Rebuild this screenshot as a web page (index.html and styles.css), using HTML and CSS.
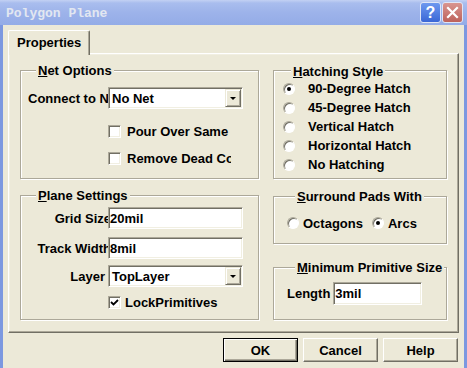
FILE: index.html
```html
<!DOCTYPE html>
<html lang="en">

<head>
    <meta charset="UTF-8">
    <title>Polygon Plane</title>
    <link rel="stylesheet" href="styles.css">
</head>

<body>
    <div class="window">
        <!-- Title bar -->
        <div class="titlebar">
            <span class="title">Polygon Plane</span>
            <div class="title-buttons">
                <span class="tbtn tbtn-help">?</span>
                <span class="tbtn tbtn-close">
                    <svg width="13" height="13" viewBox="0 0 13 13">
                        <path d="M2 2 L11 11 M11 2 L2 11" stroke="#fff" stroke-width="2.2" stroke-linecap="square" />
                    </svg>
                </span>
            </div>
        </div>

        <div class="client">
            <div class="tabs">
                <div class="tab">Properties</div>
            </div>

            <div class="panel">
                <!-- Left column -->
                <div class="col">
                    <div class="group group-net">
                        <div class="legend"><u>N</u>et Options</div>
                        <div class="row row-combo">
                            <label class="label clip">Connect to Net</label>
                            <div class="combo">
                                <span class="combo-text">No Net</span>
                                <span class="combo-btn"><i class="arrow"></i></span>
                            </div>
                        </div>
                        <div class="row row-check">
                            <span class="check"></span>
                            <span class="check-label">Pour Over Same Net Polygons Only</span>
                        </div>
                        <div class="row row-check">
                            <span class="check"></span>
                            <span class="check-label">Remove Dead Copper</span>
                        </div>
                    </div>

                    <div class="group group-plane">
                        <div class="legend"><u>P</u>lane Settings</div>
                        <div class="row row-grid">
                            <label class="label right">Grid Size</label>
                            <input class="field" type="text" value="20mil" readonly>
                        </div>
                        <div class="row row-track">
                            <label class="label right">Track Width</label>
                            <input class="field" type="text" value="8mil" readonly>
                        </div>
                        <div class="row row-layer">
                            <label class="label right layer">Layer</label>
                            <div class="combo">
                                <span class="combo-text">TopLayer</span>
                                <span class="combo-btn"><i class="arrow"></i></span>
                            </div>
                        </div>
                        <div class="row row-lock">
                            <span class="check checked">
                                <svg width="11" height="11" viewBox="0 0 11 11">
                                    <path d="M2 5 L4.5 7.5 L9 3" fill="none" stroke="#000" stroke-width="1.8" />
                                </svg>
                            </span>
                            <span class="check-label">LockPrimitives</span>
                        </div>
                    </div>
                </div>

                <!-- Right column -->
                <div class="col">
                    <div class="group group-hatch">
                        <div class="legend"><u>H</u>atching Style</div>
                        <div class="radio-row"><span class="radio on"></span>90-Degree Hatch</div>
                        <div class="radio-row"><span class="radio"></span>45-Degree Hatch</div>
                        <div class="radio-row"><span class="radio"></span>Vertical Hatch</div>
                        <div class="radio-row"><span class="radio"></span>Horizontal Hatch</div>
                        <div class="radio-row"><span class="radio"></span>No Hatching</div>
                    </div>

                    <div class="group group-pads">
                        <div class="legend"><u>S</u>urround Pads With</div>
                        <div class="row row-pads">
                            <span class="radio"></span>
                            <span class="pad-label">Octagons</span>
                            <span class="radio on"></span>
                            <span class="pad-label">Arcs</span>
                        </div>
                    </div>

                    <div class="group group-min">
                        <div class="legend"><u>M</u>inimum Primitive Size</div>
                        <div class="row row-length">
                            <label class="label-length">Length</label>
                            <input class="field field-short" type="text" value="3mil" readonly>
                        </div>
                    </div>
                </div>
            </div>

            <!-- Dialog buttons -->
            <div class="buttons">
                <button class="btn btn-default">OK</button>
                <button class="btn">Cancel</button>
                <button class="btn">Help</button>
            </div>
        </div>
    </div>
</body>

</html>
```

FILE: styles.css
```css
* {
    box-sizing: border-box;
}

body {
    margin: 0;
    font: bold 13px "Liberation Sans", Arial, sans-serif;
    color: #000;
}

.window {
    width: 467px;
    height: 368px;
    background: #7c98e0;
    display: flex;
    flex-direction: column;
    overflow: hidden;
}

/* Title bar */
.titlebar {
    height: 25px;
    flex: none;
    display: flex;
    align-items: center;
    justify-content: space-between;
    padding: 0 4px 0 6px;
    background: linear-gradient(#c3d1f3 0, #a9bdee 3px, #9db3ea 50%, #94ace7 100%);
}

.title {
    font: bold 13px "Liberation Mono", monospace;
    color: #e2e7f1;
    padding-top: 1px;
}

.title-buttons {
    display: flex;
    gap: 1px;
}

.tbtn {
    width: 21px;
    height: 21px;
    border-radius: 3px;
    border: 1px solid #dfe6f6;
    display: flex;
    align-items: center;
    justify-content: center;
    color: #fff;
}

.tbtn-help {
    background: linear-gradient(#6d98ef, #3a67d6);
    font: bold 16px "Liberation Sans", Arial, sans-serif;
}

.tbtn-close {
    background: linear-gradient(#d99590, #bd625b);
}

/* Client area */
.client {
    flex: 1;
    margin: 0 3px;
    background: #ece9d8;
    padding: 5px 5px 0 5px;
}

.tabs {
    display: flex;
}

.tab {
    position: relative;
    z-index: 1;
    width: 82px;
    height: 25px;
    margin-bottom: -2px;
    padding: 0 0 2px 8px;
    display: flex;
    align-items: center;
    background: #ece9d8;
    border: 1px solid;
    border-color: #fff #716f64 transparent #fff;
    border-bottom: none;
    border-radius: 2px 2px 0 0;
    box-shadow: inset -1px 0 #aca899;
}

.panel {
    height: 280px;
    display: grid;
    grid-template-columns: 239px 174px;
    column-gap: 14px;
    padding: 16px 11px 11px 11px;
    border: 1px solid;
    border-color: #fff #716f64 #716f64 #fff;
    box-shadow: inset -1px -1px #aca899, inset 1px 1px #f1efe2;
}

.col {
    display: flex;
    flex-direction: column;
}

/* Group boxes */
.group {
    border: 1px solid #aca899;
    box-shadow: inset 1px 1px #fff, 1px 1px #fff;
}

.legend {
    display: table;
    margin: -8px 0 0 8px;
    padding: 0 2px;
    line-height: 15px;
    background: #ece9d8;
}

.group-net {
    height: 109px;
    padding-left: 7px;
}

.group-plane {
    height: 125px;
    margin-top: 16px;
    padding-left: 7px;
}

.group-hatch {
    height: 109px;
    padding: 1px 0 0 9px;
}

.group-pads {
    height: 48px;
    margin-top: 17px;
    padding-left: 13px;
}

.group-min {
    height: 53px;
    margin-top: 23px;
    padding-left: 13px;
}

.row {
    display: flex;
    align-items: center;
}

.row-combo {
    margin-top: 9px;
}

.row-check {
    height: 27px;
    padding-left: 80px;
}

.row-combo + .row-check {
    margin-top: 9px;
}

.label {
    white-space: nowrap;
}

.clip {
    width: 80px;
    overflow: hidden;
}

.right {
    width: 83px;
    text-align: right;
}

.right.layer {
    padding-right: 6px;
}

.row-grid {
    margin-top: 4px;
}

.row-track {
    margin-top: 8px;
}

.row-layer {
    margin-top: 6px;
}

.row-lock {
    height: 20px;
    margin-top: 5px;
    padding-left: 80px;
}

.row-grid .field,
.row-track .field,
.row-layer .combo {
    margin-left: -3px;
}

/* Inputs */
.field {
    width: 135px;
    height: 22px;
    padding: 0 0 0 1px;
    font: inherit;
    color: #000;
    background: #fff;
    border: 1px solid;
    border-color: #aca899 #fff #fff #aca899;
    box-shadow: inset 1px 1px #716f64, inset -1px -1px #f1efe2;
    outline: none;
}

.field-short {
    width: 89px;
    height: 23px;
}

.combo {
    width: 135px;
    height: 22px;
    display: flex;
    align-items: stretch;
    background: #fff;
    border: 1px solid;
    border-color: #aca899 #fff #fff #aca899;
    box-shadow: inset 1px 1px #716f64, inset -1px -1px #f1efe2;
}

.combo-text {
    flex: 1;
    padding-left: 3px;
    display: flex;
    align-items: center;
}

.combo-btn {
    width: 16px;
    margin: 1px 1px 1px 0;
    display: flex;
    align-items: center;
    justify-content: center;
    background: #ece9d8;
    border: 1px solid;
    border-color: #ece9d8 #716f64 #716f64 #ece9d8;
    box-shadow: inset 1px 1px #fff, inset -1px -1px #aca899;
}

.arrow {
    width: 0;
    height: 0;
    border-left: 3px solid transparent;
    border-right: 3px solid transparent;
    border-top: 3px solid #000;
}

/* Checkboxes */
.check {
    width: 13px;
    height: 13px;
    flex: none;
    display: flex;
    align-items: center;
    justify-content: center;
    background: #fff;
    border: 1px solid;
    border-color: #aca899 #fff #fff #aca899;
    box-shadow: inset 1px 1px #716f64, inset -1px -1px #f1efe2;
}

.check-label {
    margin-left: 6px;
    width: 104px;
    overflow: hidden;
    white-space: nowrap;
}

.row-lock .check-label {
    margin-left: 4px;
    width: auto;
}

/* Radio buttons */
.radio-row {
    height: 19px;
    display: flex;
    align-items: center;
}

.radio {
    width: 12px;
    height: 12px;
    flex: none;
    border-radius: 50%;
    display: flex;
    align-items: center;
    justify-content: center;
    background: #fff;
    border: 1px solid;
    border-color: #aca899 #fff #fff #aca899;
    box-shadow: inset 1px 1px #716f64;
}

.radio-row .radio {
    margin-right: 13px;
}

.radio.on::after {
    content: "";
    width: 4px;
    height: 4px;
    border-radius: 50%;
    background: #000;
}

.row-pads {
    height: 20px;
    margin-top: 9px;
}

.pad-label {
    margin: 0 9px 0 4px;
}

.row-length {
    margin-top: 7px;
}

.label-length {
    margin-right: 3px;
}

/* Dialog buttons */
.buttons {
    display: flex;
    justify-content: flex-end;
    gap: 5px;
    margin-top: 5px;
    padding-right: 1px;
}

.btn {
    width: 75px;
    height: 24px;
    padding: 0;
    font: inherit;
    color: #000;
    background: #ece9d8;
    border: 1px solid;
    border-color: #fff #716f64 #716f64 #fff;
    box-shadow: inset -1px -1px #aca899;
}

.btn-default {
    border-color: #000;
    box-shadow: inset 1px 1px #fff, inset -1px -1px #716f64, inset -2px -2px #aca899;
}
```
